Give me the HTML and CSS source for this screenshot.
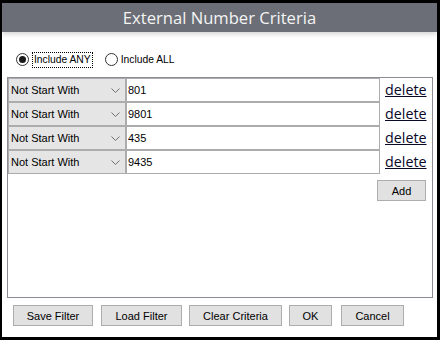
FILE: index.html
```html
<!DOCTYPE html>
<html>
<head>
<meta charset="utf-8">
<link rel="stylesheet" href="styles.css">
</head>
<body>
<div class="frame">
  <div class="dialog">
    <div class="titlebar">External Number Criteria</div>
    <div class="options">
      <span class="radio"><span class="dot"></span></span>
      <span class="label focused">Include ANY</span>
      <span class="radio second"></span>
      <span class="label">Include ALL</span>
    </div>
    <div class="listbox">
      <div class="row">
        <div class="select"><span>Not Start With</span><svg class="chev" width="9" height="5" viewBox="0 0 9 5"><polyline points="0.5,0.5 4.5,4.5 8.5,0.5" fill="none" stroke="#707070" stroke-width="1"/></svg></div>
        <div class="input">801</div>
        <div class="del"><span class="link">delete</span></div>
      </div>
      <div class="row">
        <div class="select"><span>Not Start With</span><svg class="chev" width="9" height="5" viewBox="0 0 9 5"><polyline points="0.5,0.5 4.5,4.5 8.5,0.5" fill="none" stroke="#707070" stroke-width="1"/></svg></div>
        <div class="input">9801</div>
        <div class="del"><span class="link">delete</span></div>
      </div>
      <div class="row">
        <div class="select"><span>Not Start With</span><svg class="chev" width="9" height="5" viewBox="0 0 9 5"><polyline points="0.5,0.5 4.5,4.5 8.5,0.5" fill="none" stroke="#707070" stroke-width="1"/></svg></div>
        <div class="input">435</div>
        <div class="del"><span class="link">delete</span></div>
      </div>
      <div class="row">
        <div class="select"><span>Not Start With</span><svg class="chev" width="9" height="5" viewBox="0 0 9 5"><polyline points="0.5,0.5 4.5,4.5 8.5,0.5" fill="none" stroke="#707070" stroke-width="1"/></svg></div>
        <div class="input">9435</div>
        <div class="del"><span class="link">delete</span></div>
      </div>
      <div class="addwrap"><button class="btn add">Add</button></div>
    </div>
    <div class="buttons">
      <button class="btn b-save">Save Filter</button>
      <button class="btn b-load">Load Filter</button>
      <button class="btn b-clear">Clear Criteria</button>
      <button class="btn b-ok">OK</button>
      <button class="btn b-cancel">Cancel</button>
    </div>
  </div>
</div>
</body>
</html>
```
FILE: styles.css
```css
html, body {
  margin: 0;
  padding: 0;
  background: #000;
}
.frame {
  width: 440px;
  height: 340px;
  box-sizing: border-box;
  padding: 3px 3px 3px 2px;
  background: #000;
}
.dialog {
  width: 100%;
  height: 100%;
  background: #fff;
  font-family: "Liberation Sans", Arial, sans-serif;
  font-size: 11px;
  color: #000;
}
.titlebar {
  position: relative;
  height: 29px;
  line-height: 29px;
  background: #6b6e76;
  color: #f4f4f4;
  font-family: "Open Sans", sans-serif;
  font-size: 16.6px;
  text-align: center;
  box-shadow: 0 2px 5px rgba(0, 0, 0, 0.18);
}
.options {
  display: flex;
  align-items: center;
  height: 15px;
  margin: 20px 0 0 14px;
}
.radio {
  width: 13px;
  height: 13px;
  box-sizing: border-box;
  border: 1px solid #333;
  border-radius: 50%;
  background: #fff;
  display: flex;
  align-items: center;
  justify-content: center;
}
.dot {
  width: 7px;
  height: 7px;
  border-radius: 50%;
  background: #1a1a1a;
}
.label {
  font-size: 10.3px;
  line-height: 13px;
}
.focused {
  margin-left: 3px;
  padding: 0 1px;
  height: 14px;
  line-height: 14px;
  border: 1px dotted #000;
}
.radio.second {
  margin-left: 12px;
  margin-right: 3px;
}
.listbox {
  margin: 10px 0 0 5px;
  width: 426px;
  height: 221px;
  box-sizing: border-box;
  border: 1px solid #8a8d94;
}
.row {
  display: grid;
  grid-template-columns: 118px 254px 52px;
  height: 24px;
}
.select {
  box-sizing: border-box;
  border: 1px solid #acacac;
  background: #e5e5e5;
  display: flex;
  align-items: center;
  justify-content: space-between;
  padding: 0 5px 0 2px;
}
.chev {
  display: block;
}
.input {
  box-sizing: border-box;
  border: 1px solid #acacac;
  background: #fff;
  display: flex;
  align-items: center;
  padding-left: 1px;
}
.del {
  display: flex;
  align-items: center;
  padding-left: 5px;
}
.link {
  font-family: "Open Sans", sans-serif;
  font-size: 14.3px;
  color: #0a0a2a;
  text-decoration: underline;
  line-height: 18px;
}
.addwrap {
  display: flex;
  justify-content: flex-end;
  padding: 6px 6px 0 0;
}
.btn {
  box-sizing: border-box;
  height: 21px;
  margin: 0;
  padding: 0;
  background: #e1e1e1;
  border: 1px solid #adadad;
  font-family: "Liberation Sans", Arial, sans-serif;
  font-size: 11px;
  color: #000;
  text-align: center;
}
.add {
  width: 49px;
}
.buttons {
  display: flex;
  margin: 7px 0 0 11px;
}
.b-save { width: 80px; }
.b-load { width: 81px; margin-left: 8px; }
.b-clear { width: 93px; margin-left: 7px; }
.b-ok { width: 43px; margin-left: 7px; }
.b-cancel { width: 63px; margin-left: 9px; }
```
